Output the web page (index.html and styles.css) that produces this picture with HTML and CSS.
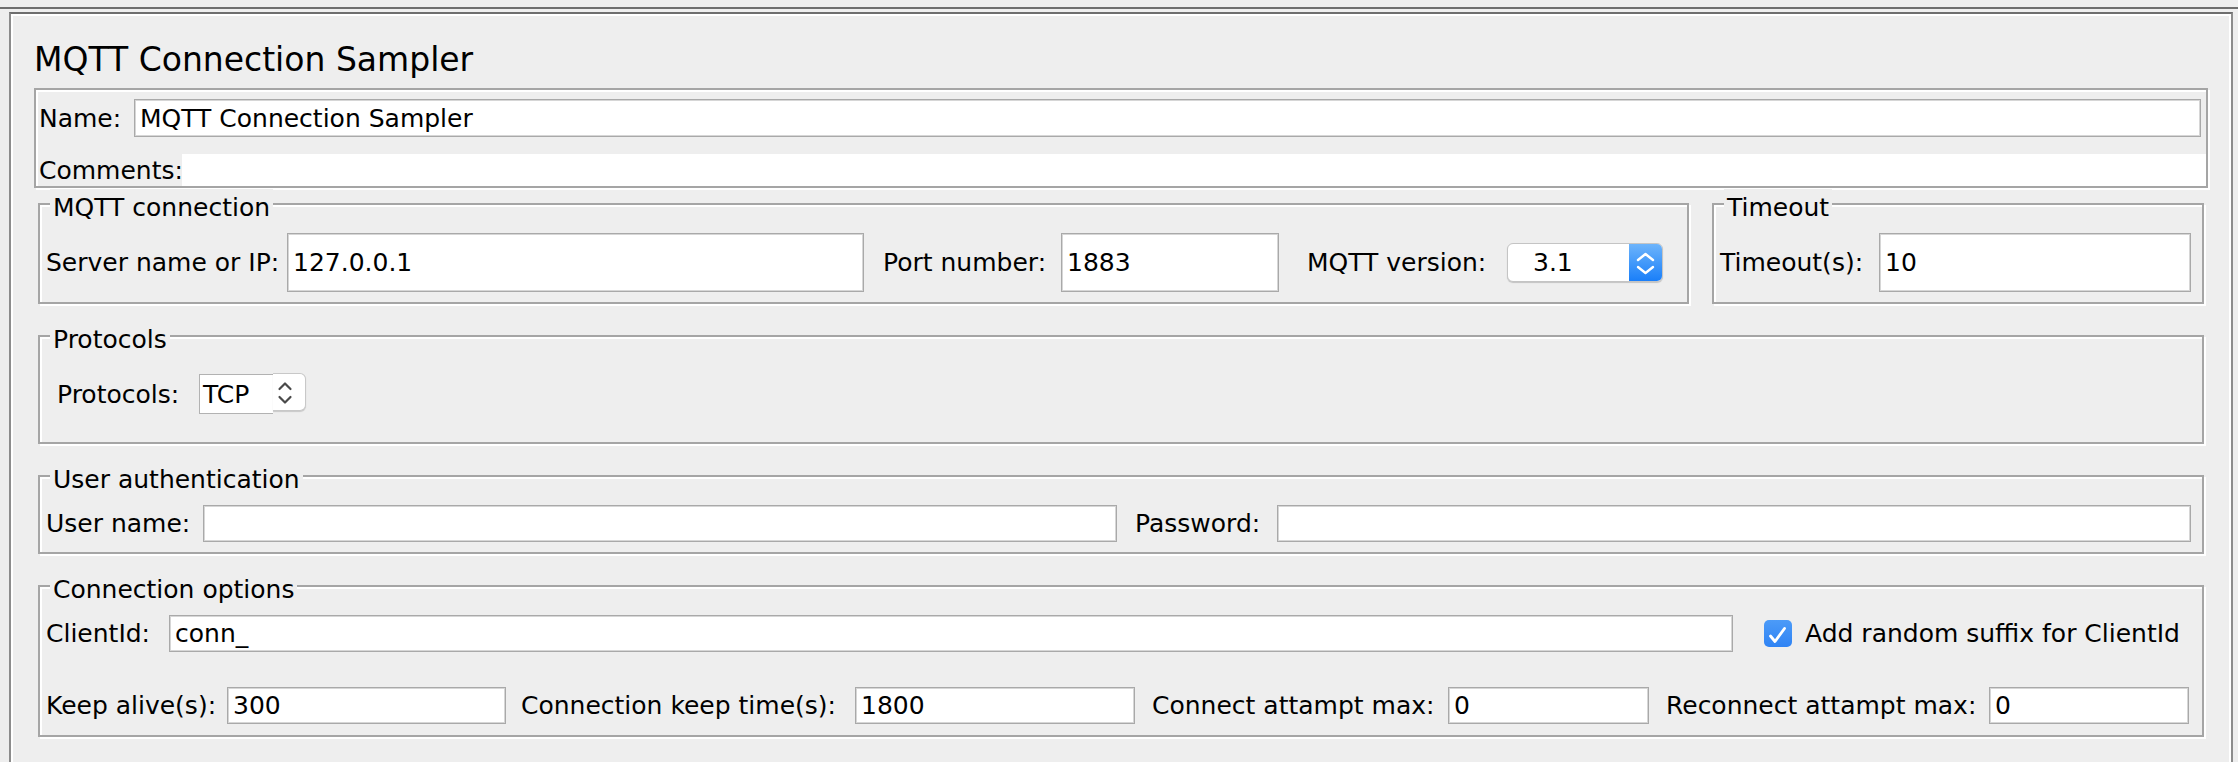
FILE: index.html
```html
<!DOCTYPE html>
<html lang="en">
<head>
<meta charset="utf-8">
<title>MQTT Connection Sampler</title>
<link rel="stylesheet" href="styles.css">
</head>
<body>
<div class="sep"></div>
<div class="panel">
  <div class="title">MQTT Connection Sampler</div>

  <div class="namebox">
    <div class="name-row">
      <span class="lbl">Name:</span>
      <div class="field">MQTT Connection Sampler</div>
    </div>
    <div class="comments-row">
      <span class="lbl">Comments:</span>
      <div class="comments-area"></div>
    </div>
  </div>

  <div class="conn-row">
    <fieldset class="group mqtt">
      <legend>MQTT connection</legend>
      <div class="grid g-mqtt">
        <span class="lbl">Server name or IP:</span>
        <div class="field">127.0.0.1</div>
        <span class="lbl pl19">Port number:</span>
        <div class="field">1883</div>
        <span class="lbl pl28">MQTT version:</span>
        <div class="combo">
          <span class="combo-text">3.1</span>
          <span class="combo-step">
            <svg width="33" height="39" viewBox="0 0 33 39"><polyline points="9,17 16.5,11 24,17" fill="none" stroke="#fff" stroke-width="2.4" stroke-linecap="round" stroke-linejoin="round"/><polyline points="9,24 16.5,30 24,24" fill="none" stroke="#fff" stroke-width="2.4" stroke-linecap="round" stroke-linejoin="round"/></svg>
          </span>
        </div>
      </div>
    </fieldset>
    <fieldset class="group timeout">
      <legend>Timeout</legend>
      <div class="grid g-timeout">
        <span class="lbl">Timeout(s):</span>
        <div class="field">10</div>
      </div>
    </fieldset>
  </div>

  <fieldset class="group protocols">
    <legend>Protocols</legend>
    <div class="grid g-proto">
      <span class="lbl">Protocols:</span>
      <div class="tcp">
        <div class="tcp-body">TCP</div>
        <div class="tcp-step">
          <svg width="32" height="37" viewBox="0 0 32 37"><polyline points="6.5,15 12,9.5 17.5,15" fill="none" stroke="#4a4a4a" stroke-width="2.2" stroke-linecap="round" stroke-linejoin="round"/><polyline points="6.5,23 12,28.5 17.5,23" fill="none" stroke="#4a4a4a" stroke-width="2.2" stroke-linecap="round" stroke-linejoin="round"/></svg>
        </div>
      </div>
    </div>
  </fieldset>

  <fieldset class="group auth">
    <legend>User authentication</legend>
    <div class="grid g-auth">
      <span class="lbl">User name:</span>
      <div class="field"></div>
      <span class="lbl pl18">Password:</span>
      <div class="field"></div>
    </div>
  </fieldset>

  <fieldset class="group options">
    <legend>Connection options</legend>
    <div class="grid g-client">
      <span class="lbl">ClientId:</span>
      <div class="field">conn_</div>
      <label class="check">
        <span class="box">
          <svg width="28" height="27" viewBox="0 0 28 27"><polyline points="6.5,16 11,21.5 20.5,8.5" fill="none" stroke="#fff" stroke-width="2.8" stroke-linecap="round" stroke-linejoin="round"/></svg>
        </span>
        <span>Add random suffix for ClientId</span>
      </label>
    </div>
    <div class="grid g-keep">
      <span class="lbl">Keep alive(s):</span>
      <div class="field">300</div>
      <span class="lbl pl13">Connection keep time(s):</span>
      <div class="field">1800</div>
      <span class="lbl pl17">Connect attampt max:</span>
      <div class="field">0</div>
      <span class="lbl pl17">Reconnect attampt max:</span>
      <div class="field">0</div>
    </div>
  </fieldset>
</div>
</body>
</html>
```

FILE: styles.css
```css
* { box-sizing: border-box; }

html, body {
  margin: 0;
  padding: 0;
}

body {
  width: 2238px;
  height: 762px;
  overflow: hidden;
  background: #eeeeee;
  color: #000;
  font-family: "DejaVu Sans", "Liberation Sans", sans-serif;
  font-size: 25px;
}

.sep {
  height: 2px;
  margin-top: 7px;
  background: #6e6e6e;
}

.panel {
  margin: 3px 5px 0 9px;
  height: 760px;
  border-top: 2px solid #6e6e6e;
  border-left: 2px solid #8c8c8c;
  border-right: 2px solid #8c8c8c;
  box-shadow: inset 2px 2px 0 #fff, inset -2px 0 0 #fff;
  padding-top: 27px;
}

.title {
  margin-left: 23px;
  font-size: 33px;
  line-height: 38px;
  white-space: nowrap;
}

.lbl {
  white-space: nowrap;
}

.field {
  background: #fff;
  border: 1px solid #a9a9a9;
  box-shadow: inset 0 0 0 1px #d6d6d6;
  padding-left: 5px;
  display: flex;
  align-items: center;
  white-space: nowrap;
  overflow: hidden;
}

/* Name / comments box */
.namebox {
  margin: 9px 23px 0;
  border: 2px solid #a5a5a5;
  box-shadow: inset 2px 2px 0 #fff, 2px 2px 0 #fff;
  padding: 9px 5px 0 3px;
}

.name-row {
  display: grid;
  grid-template-columns: 95px 1fr;
  align-items: center;
  height: 38px;
}

.name-row .field { height: 38px; }

.comments-row {
  display: grid;
  grid-template-columns: 143px 1fr;
  align-items: center;
  height: 32px;
  margin-top: 17px;
  margin-right: -5px;
}

.comments-area {
  height: 32px;
  background: #fff;
}

/* group boxes */
.group {
  margin: 17px 27px 0;
  border: 2px solid #a5a5a5;
  box-shadow: inset 2px 2px 0 #fff, 2px 2px 0 #fff;
  padding: 14px 10px 10px 6px;
  min-width: 0;
}

.group legend {
  margin-left: 4px;
  padding: 8px 3px 0;
  line-height: 22px;
  background: #eeeeee;
  white-space: nowrap;
}

.conn-row {
  display: flex;
  gap: 23px;
  margin: 1px 27px 0;
}

.conn-row .group {
  margin: 0;
}

.mqtt { flex: 1; }
.timeout { flex: none; width: 492px; }

.grid {
  display: grid;
  align-items: center;
}

.g-mqtt {
  grid-template-columns: 241px 577px 197px 218px 228px 156px;
  height: 59px;
}

.g-mqtt .field,
.g-timeout .field { height: 59px; }

.g-timeout {
  grid-template-columns: 159px 312px;
  height: 59px;
}

.pl13 { padding-left: 15px; }
.pl17 { padding-left: 17px; }
.pl18 { padding-left: 18px; }
.pl19 { padding-left: 19px; }
.pl28 { padding-left: 28px; }

/* MQTT version combo */
.combo {
  width: 156px;
  height: 39px;
  display: flex;
  background: #fff;
  border: 1px solid #c4c4c4;
  border-radius: 6px;
  box-shadow: 0 1px 1px rgba(0, 0, 0, 0.18);
  overflow: hidden;
}

.combo-text {
  flex: 1;
  padding-left: 25px;
  display: flex;
  align-items: center;
}

.combo-step {
  width: 33px;
  flex: none;
  background: linear-gradient(#6db4fb, #1a7ff9);
  display: flex;
  align-items: center;
  justify-content: center;
}

.combo-step svg { display: block; }

/* Protocols */
.protocols {
  padding-top: 23px;
  padding-bottom: 28px;
}

.g-proto {
  grid-template-columns: 142px 107px;
  height: 40px;
  margin-left: 11px;
}

.tcp {
  display: flex;
  height: 40px;
}

.tcp-body {
  width: 74px;
  height: 40px;
  background: #fff;
  border: 1px solid #b2b2b2;
  border-right: none;
  padding-left: 3px;
  display: flex;
  align-items: center;
}

.tcp-step {
  width: 33px;
  height: 38px;
  margin-top: -1px;
  background: #fff;
  border: 1px solid #c8c8c8;
  border-left: none;
  border-radius: 0 6px 6px 0;
  box-shadow: 0 1px 1px rgba(0, 0, 0, 0.16);
}

.tcp-step svg { display: block; }

/* User authentication */
.g-auth {
  grid-template-columns: 157px 914px 160px 914px;
  height: 37px;
}

.g-auth .field { height: 37px; }

/* Connection options */
.options { padding-bottom: 11px; }

.g-client {
  grid-template-columns: 123px 1564px auto;
  height: 37px;
}

.g-keep {
  grid-template-columns: 181px 279px 349px 280px 313px 201px 340px 200px;
  height: 37px;
  margin-top: 35px;
}

.g-client .field,
.g-keep .field { height: 37px; }

.check {
  display: flex;
  align-items: center;
  margin-left: 31px;
  gap: 13px;
  white-space: nowrap;
}

.box {
  width: 28px;
  height: 27px;
  border-radius: 5px;
  background: linear-gradient(#4c9bf8, #2f83f4);
  display: block;
}

.box svg { display: block; }
```
